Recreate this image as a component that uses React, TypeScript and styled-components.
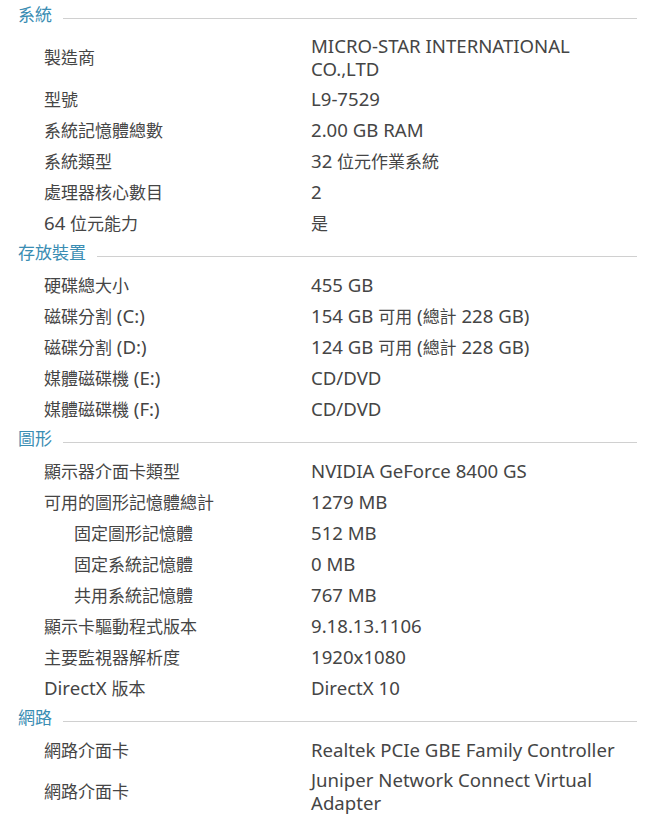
import React from 'react';
import styled, { createGlobalStyle } from 'styled-components';

const GlobalStyle = createGlobalStyle`
  body {
    margin: 0;
    background: #ffffff;
    font-family: 'Noto Sans', 'Noto Sans CJK TC', sans-serif;
  }
`;

const Page = styled.div`
  width: 649px;
  padding: 0 12px 0 18px;
  box-sizing: border-box;
`;

const SectionHeader = styled.div`
  height: 31px;
  box-sizing: border-box;
  padding-bottom: 4px;
  display: flex;
  align-items: center;
  gap: 11px;
  color: #3a8db3;
  font-size: 17px;

  &::after {
    content: '';
    flex: 1;
    height: 1px;
    margin-top: 9px;
    background: #d0d0d0;
  }
`;

const Row = styled.div<{ $indent?: boolean; $tall?: boolean }>`
  display: grid;
  grid-template-columns: 293px 1fr;
  align-items: center;
  min-height: ${(p) => (p.$tall ? '52px' : '31px')};
  color: #454545;
  font-size: 18.6px;
  line-height: 23px;

  .label {
    padding-left: ${(p) => (p.$indent ? '56px' : '26px')};
  }
`;

const Cjk = styled.span`
  font-size: 17px;
`;

const cjkRun = /([\u3000-\u9fff\uff00-\uffef]+)/;

const Text = ({ children }: { children: string }) => (
  <>
    {children.split(cjkRun).map((part, i) =>
      cjkRun.test(part) ? <Cjk key={i}>{part}</Cjk> : <React.Fragment key={i}>{part}</React.Fragment>,
    )}
  </>
);

type Item = { label: string; value: string; indent?: boolean; tall?: boolean };
type Section = { title: string; items: Item[] };

const sections: Section[] = [
  {
    title: '系統',
    items: [
      { label: '製造商', value: 'MICRO-STAR INTERNATIONAL CO.,LTD', tall: true },
      { label: '型號', value: 'L9-7529' },
      { label: '系統記憶體總數', value: '2.00 GB RAM' },
      { label: '系統類型', value: '32 位元作業系統' },
      { label: '處理器核心數目', value: '2' },
      { label: '64 位元能力', value: '是' },
    ],
  },
  {
    title: '存放裝置',
    items: [
      { label: '硬碟總大小', value: '455 GB' },
      { label: '磁碟分割 (C:)', value: '154 GB 可用 (總計 228 GB)' },
      { label: '磁碟分割 (D:)', value: '124 GB 可用 (總計 228 GB)' },
      { label: '媒體磁碟機 (E:)', value: 'CD/DVD' },
      { label: '媒體磁碟機 (F:)', value: 'CD/DVD' },
    ],
  },
  {
    title: '圖形',
    items: [
      { label: '顯示器介面卡類型', value: 'NVIDIA GeForce 8400 GS' },
      { label: '可用的圖形記憶體總計', value: '1279 MB' },
      { label: '固定圖形記憶體', value: '512 MB', indent: true },
      { label: '固定系統記憶體', value: '0 MB', indent: true },
      { label: '共用系統記憶體', value: '767 MB', indent: true },
      { label: '顯示卡驅動程式版本', value: '9.18.13.1106' },
      { label: '主要監視器解析度', value: '1920x1080' },
      { label: 'DirectX 版本', value: 'DirectX 10' },
    ],
  },
  {
    title: '網路',
    items: [
      { label: '網路介面卡', value: 'Realtek PCIe GBE Family Controller' },
      { label: '網路介面卡', value: 'Juniper Network Connect Virtual Adapter', tall: true },
    ],
  },
];

const App = () => {
  return (
    <>
      <GlobalStyle />
      <Page>
        {sections.map((s) => (
          <div key={s.title}>
            <SectionHeader>{s.title}</SectionHeader>
            {s.items.map((it, i) => (
              <Row key={i} $indent={it.indent} $tall={it.tall}>
                <span className="label">
                  <Text>{it.label}</Text>
                </span>
                <span className="value">
                  <Text>{it.value}</Text>
                </span>
              </Row>
            ))}
          </div>
        ))}
      </Page>
    </>
  );
};

export default App;
